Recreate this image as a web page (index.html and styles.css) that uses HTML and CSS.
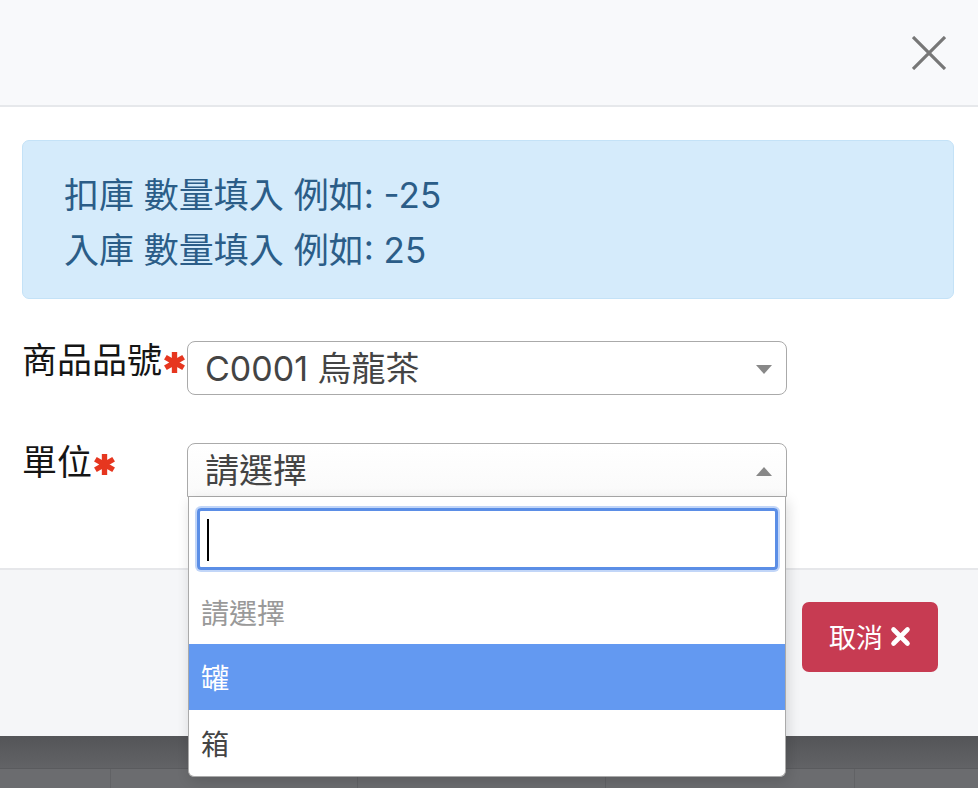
FILE: index.html
```html
<!DOCTYPE html>
<html lang="zh-Hant">
<head>
<meta charset="utf-8">
<title>調整庫存</title>
<link rel="stylesheet" href="styles.css">
</head>
<body>
<div class="modal">
  <header class="modal-header">
    <button class="close" aria-label="close">
      <svg width="34" height="34" viewBox="0 0 34 34"><path d="M1 1 L33 33 M33 1 L1 33" stroke="#777" stroke-width="3.2" fill="none"/></svg>
    </button>
  </header>
  <main class="modal-body">
    <div class="alert">
      <p>扣庫 數量填入 例如: -25</p>
      <p>入庫 數量填入 例如: 25</p>
    </div>
    <div class="form-row">
      <label class="form-label">商品品號<svg class="req" viewBox="0 0 24 24"><path d="M12 1 V23 M2.5 6.5 L21.5 17.5 M2.5 17.5 L21.5 6.5" stroke="#e6361f" stroke-width="5.6" fill="none"/></svg></label>
      <div class="select">
        <span class="select-text">C0001 烏龍茶</span>
        <span class="arrow down"></span>
      </div>
    </div>
    <div class="form-row">
      <label class="form-label">單位<svg class="req" viewBox="0 0 24 24"><path d="M12 1 V23 M2.5 6.5 L21.5 17.5 M2.5 17.5 L21.5 6.5" stroke="#e6361f" stroke-width="5.6" fill="none"/></svg></label>
      <div class="select-wrap">
        <div class="select open">
          <span class="select-text">請選擇</span>
          <span class="arrow up"></span>
        </div>
        <div class="dropdown">
          <div class="search-box">
            <div class="search-input"><span class="caret"></span></div>
          </div>
          <ul class="options">
            <li class="option placeholder">請選擇</li>
            <li class="option active">罐</li>
            <li class="option">箱</li>
          </ul>
        </div>
      </div>
    </div>
  </main>
  <footer class="modal-footer">
    <button class="btn-cancel">取消 <svg width="21" height="21" viewBox="0 0 21 21"><path d="M3.5 3.5 L17.5 17.5 M17.5 3.5 L3.5 17.5" stroke="#fff" stroke-width="4.6" stroke-linecap="round" fill="none"/></svg></button>
  </footer>
</div>
<div class="backdrop">
  <div class="bd-head"></div>
  <div class="bd-row">
    <div class="bd-cell"></div>
    <div class="bd-cell"></div>
    <div class="bd-cell"></div>
    <div class="bd-cell"></div>
    <div class="bd-cell"></div>
  </div>
</div>
</body>
</html>
```

FILE: styles.css
```css
* { box-sizing: border-box; }
html, body { margin: 0; padding: 0; }
body {
  width: 978px;
  height: 788px;
  overflow: hidden;
  font-family: Inter, "Noto Sans CJK TC", sans-serif;
  color: #222;
  background: #fff;
}
.modal { display: flex; flex-direction: column; }
.modal-header {
  height: 107px;
  background: #f8f9fb;
  border-bottom: 2px solid #e6e8eb;
  display: flex;
  justify-content: flex-end;
  align-items: center;
  padding-right: 32px;
}
.close {
  border: 0;
  background: transparent;
  padding: 0;
  display: flex;
  cursor: pointer;
}
.modal-body {
  height: 461px;
  padding: 33px 24px 0 22px;
  background: #fff;
}
.alert {
  background: #d5ebfb;
  border: 1px solid #c4e2f7;
  border-radius: 7px;
  padding: 27px 41px 21px;
  color: #2b5d88;
  font-size: 35px;
  line-height: 55px;
  height: 159px;
}
.alert p { margin: 0; }
.form-row {
  display: flex;
  align-items: flex-start;
  margin-top: 42px;
}
.form-row + .form-row { margin-top: 48px; }
.form-label {
  width: 165px;
  flex: none;
  font-size: 35px;
  line-height: 54px;
  margin-top: -8px;
  color: #151515;
  display: flex;
  align-items: center;
}
.req { width: 23px; height: 23px; flex: none; margin: 4px 0 0 1px; }
.select-wrap { position: relative; width: 600px; }
.select {
  width: 600px;
  height: 54px;
  border: 1.5px solid #aaa;
  border-radius: 8px;
  display: flex;
  align-items: center;
  justify-content: space-between;
  padding: 0 14px 0 17px;
  background: #fff;
}
.select.open {
  border-radius: 8px 8px 0 0;
  background: linear-gradient(#fff, #fafafa);
}
.select-text {
  font-size: 34px;
  color: #444;
  line-height: 54px;
  margin-top: 2px;
}
.arrow { width: 0; height: 0; border-left: 8px solid transparent; border-right: 8px solid transparent; }
.arrow.down { border-top: 9px solid #888; margin-top: 2px; }
.arrow.up { border-bottom: 9px solid #888; margin-top: 2px; }
.dropdown {
  position: absolute;
  left: 1px;
  top: 54px;
  width: 598px;
  background: #fff;
  border: 1px solid #aaa;
  border-top: 0;
  border-radius: 0 0 6px 6px;
  box-shadow: 2px 4px 14px rgba(0,0,0,0.14);
  overflow: hidden;
  z-index: 10;
}
.search-box { padding: 11px 7px 10px 8px; }
.search-input {
  height: 62px;
  border: 3px solid #5b8ee6;
  border-radius: 4px;
  box-shadow: 0 0 0 2px rgba(120,165,240,0.45);
  padding: 8px 7px;
  display: flex;
}
.caret { width: 2px; height: 42px; background: #000; }
.options { list-style: none; margin: 0; padding: 0; }
.option {
  height: 66px;
  display: flex;
  align-items: center;
  padding-left: 12px;
  font-size: 28px;
  color: #444;
}
.option.placeholder { color: #999; height: 64px; }
.option.active { background: #6399f1; color: #fff; }
.modal-footer {
  height: 168px;
  background: #f5f6f8;
  border-top: 2px solid #e6e7ea;
  display: flex;
  justify-content: flex-end;
  align-items: flex-start;
  padding: 32px 40px 0 0;
}
.btn-cancel {
  width: 136px;
  height: 70px;
  border: 0;
  border-radius: 7px;
  background: #c73b52;
  color: #fff;
  font-family: "Noto Sans CJK TC", sans-serif;
  font-size: 27px;
  display: flex;
  align-items: center;
  justify-content: center;
  gap: 7px;
  padding: 0 0 2px;
}
.backdrop {
  height: 52px;
  display: flex;
  flex-direction: column;
}
.bd-head {
  height: 33px;
  background: linear-gradient(#545558, #626366);
  border-bottom: 1px solid #5a5b5e;
}
.bd-row {
  flex: 1;
  display: grid;
  grid-template-columns: 110px 247px 248px 249px 1fr;
  background: #6b6c6f;
}
.bd-cell + .bd-cell { border-left: 1px solid #616265; }
```
